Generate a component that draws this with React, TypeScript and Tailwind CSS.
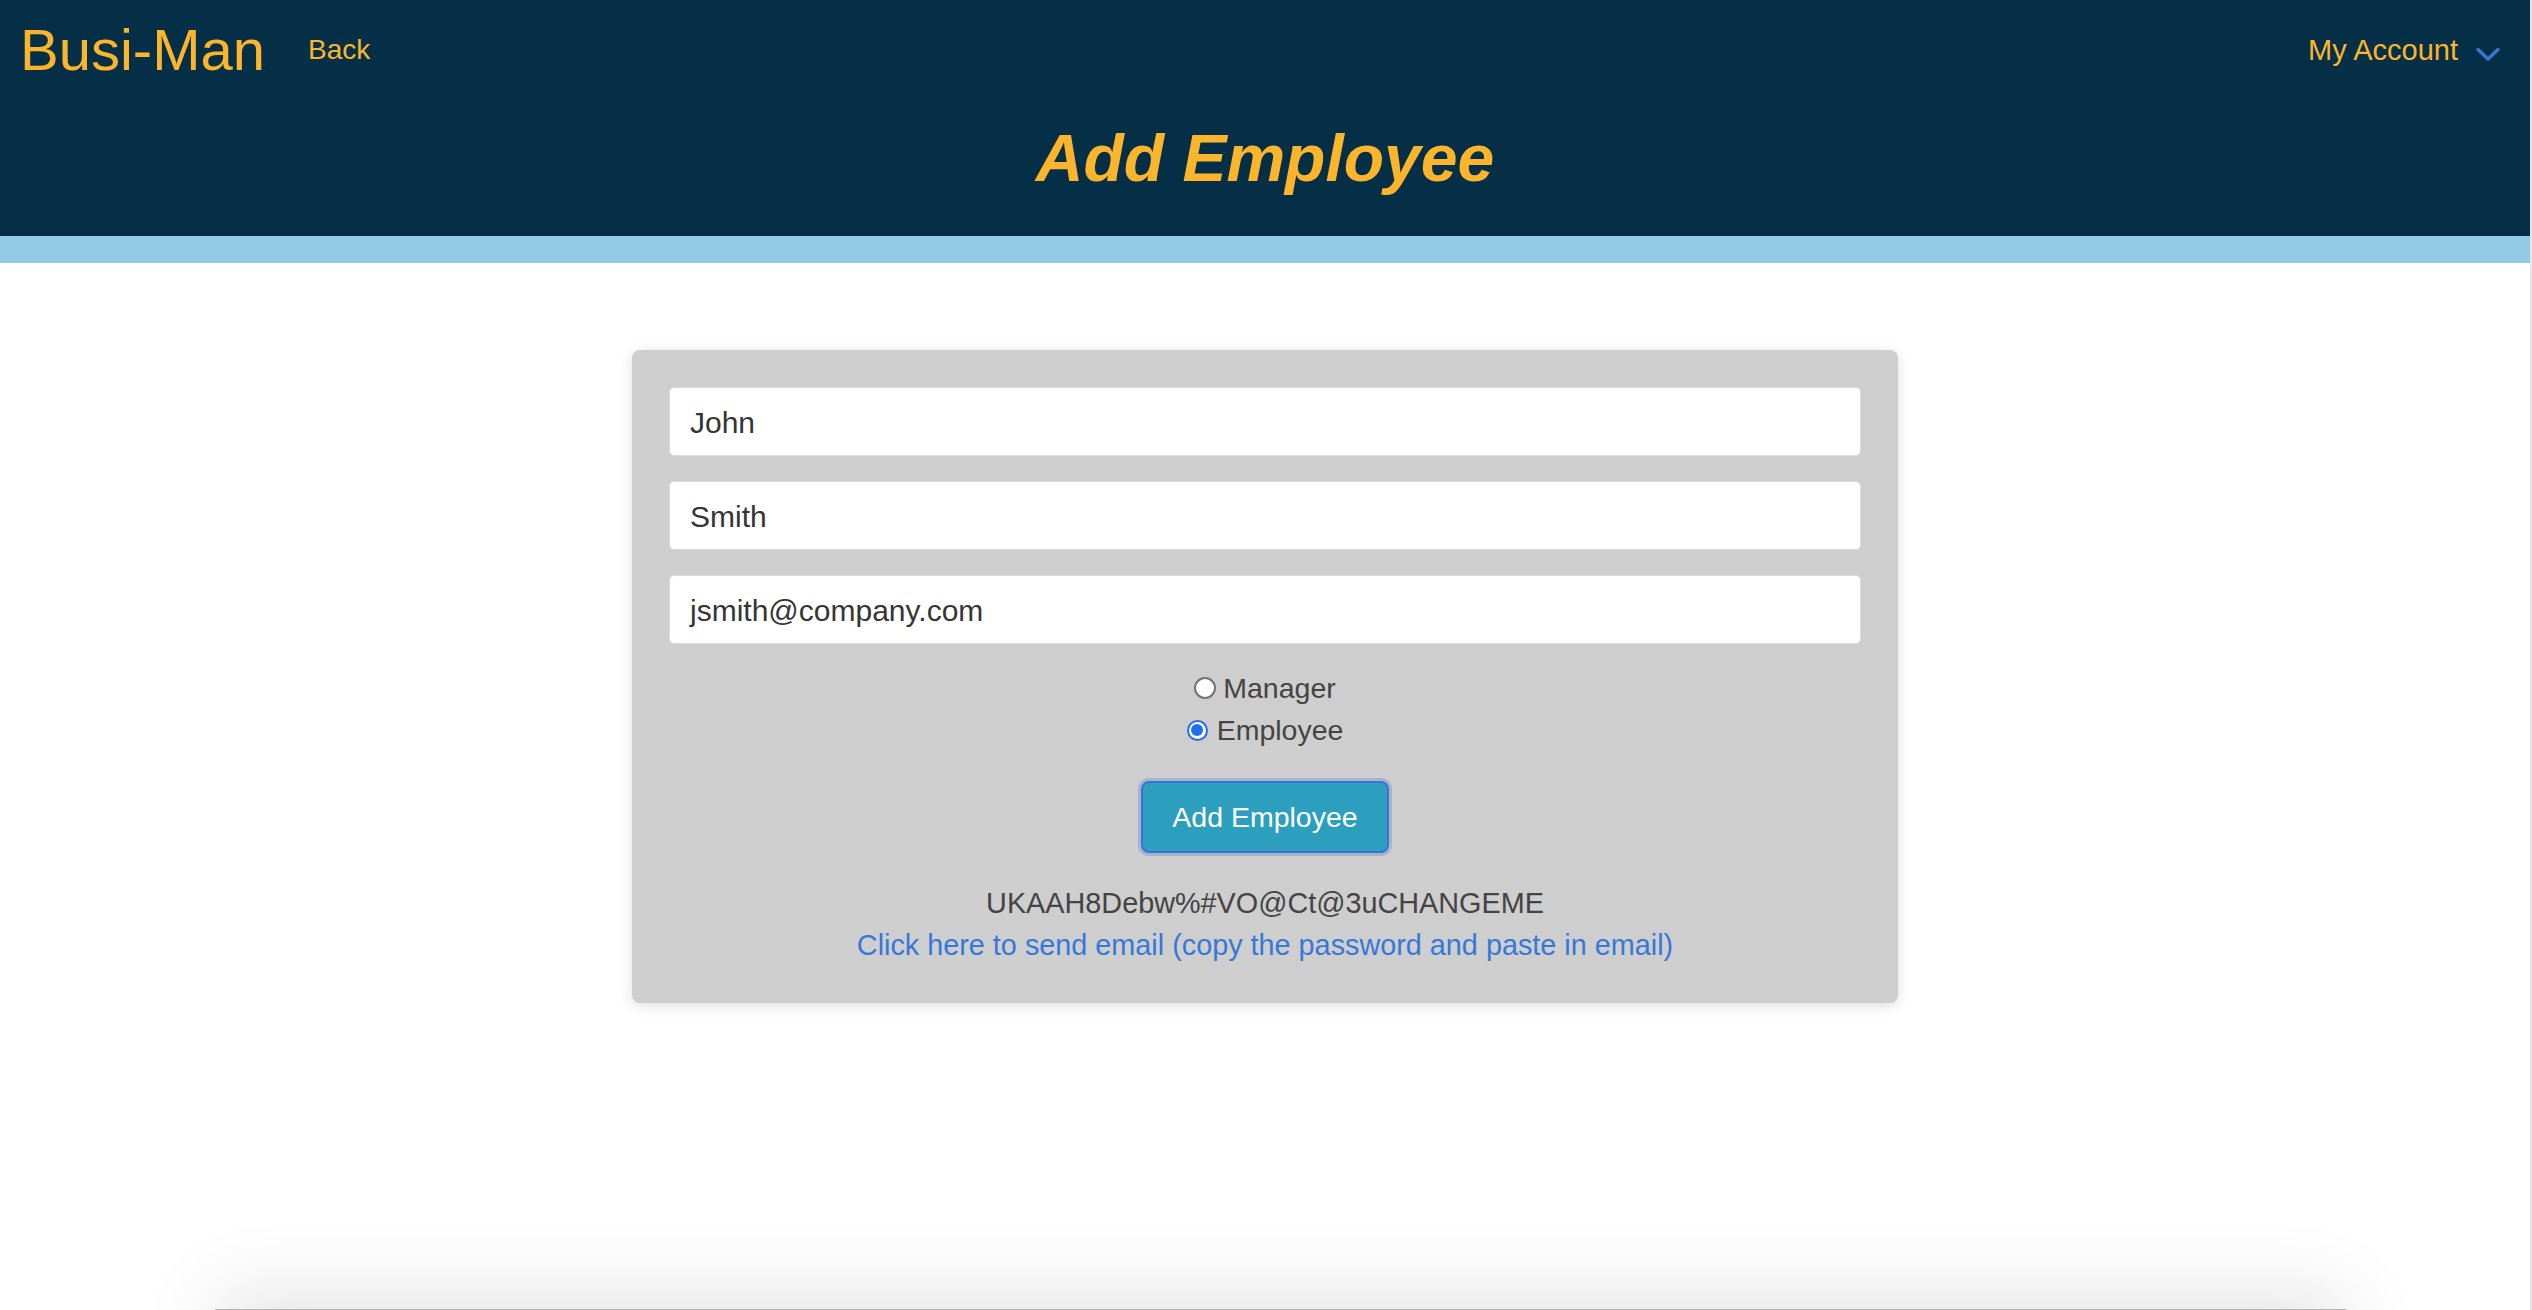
import React from "react";

const font = { fontFamily: '"Liberation Sans", Arial, Helvetica, sans-serif' };

function Radio({ checked }: { checked: boolean }) {
  return checked ? (
    <span className="flex h-[21px] w-[21px] items-center justify-center rounded-full bg-[#1f6ff0]">
      <span className="flex h-[17px] w-[17px] items-center justify-center rounded-full bg-white">
        <span className="h-[12px] w-[12px] rounded-full bg-[#1f6ff0]" />
      </span>
    </span>
  ) : (
    <span className="h-[22px] w-[22px] rounded-full border-[2px] border-[#737373] bg-white" />
  );
}

export default function App() {
  return (
    <div className="flex h-[1310px] w-full overflow-hidden bg-white" style={font}>
      <div className="flex min-w-0 flex-1 flex-col">
        <header className="h-[236px] shrink-0 bg-[#042f46]">
          <div className="flex items-start justify-between">
            <div className="flex items-start">
              <a className="ml-[20px] mt-[21px] text-[58px] leading-none text-[#fbb52c]">Busi-Man</a>
              <a className="ml-[43px] mt-[36px] text-[28px] leading-none text-[#fbb52c]">Back</a>
            </div>
            <div className="mr-[30px] mt-[36px] flex items-start">
              <span className="text-[29px] leading-none text-[#fbb52c]">My Account</span>
              <svg className="ml-[18px] mt-[11px]" width="24" height="15" viewBox="0 0 24 15" fill="none">
                <path d="M2 2.5 L12 12 L22 2.5" stroke="#3a78d6" strokeWidth="3.2" strokeLinecap="round" strokeLinejoin="round" />
              </svg>
            </div>
          </div>
          <h1 className="mt-[46px] text-center text-[66px] font-bold italic leading-none text-[#fbb52c]">Add Employee</h1>
        </header>
        <div className="h-[27px] shrink-0 bg-[#93cbe5]" />
        <main className="flex flex-col items-center">
          <div className="mt-[87px] flex w-[1266px] flex-col rounded-[8px] bg-[#cecece] px-[37px] pb-[37px] pt-[37px] shadow-[0_3px_14px_rgba(0,0,0,0.13)]">
            <div className="flex flex-col gap-[25px]">
              {["John", "Smith", "jsmith@company.com"].map((v) => (
                <div
                  key={v}
                  className="flex h-[69px] items-center rounded-[5px] border border-[#dcdcdc] bg-white pl-[20px] pt-[2px] text-[30px] text-[#353535]"
                >
                  {v}
                </div>
              ))}
            </div>
            <div className="mt-[23px] flex flex-col items-center text-[28.5px] leading-[42px] text-[#444444]">
              <label className="flex items-center gap-[7px]">
                <Radio checked={false} />
                <span>Manager</span>
              </label>
              <label className="flex items-center gap-[9px]">
                <Radio checked={true} />
                <span>Employee</span>
              </label>
            </div>
            <div className="mt-[30px] flex justify-center">
              <button className="flex h-[72px] w-[248px] items-center justify-center rounded-[8px] border-2 border-[#3a72d8] bg-[#2b9fbd] text-[28.5px] text-white shadow-[0_0_0_3px_rgba(120,145,200,0.45)]">
                Add Employee
              </button>
            </div>
            <div className="mt-[29px] text-center text-[28.8px] leading-[42px] text-[#444444]">
              UKAAH8Debw%#VO@Ct@3uCHANGEME
            </div>
            <a className="text-center text-[28.8px] leading-[42px] text-[#3678d8]">
              Click here to send email (copy the password and paste in email)
            </a>
          </div>
          <div className="ml-[30px] mt-[306px] h-[120px] w-[2131px] shrink-0 border-t-2 border-[#b4b4b4] bg-[#d0d0d0] shadow-[0_-16px_80px_rgba(0,0,0,0.11)]" />
        </main>
      </div>
      <div className="w-[2px] shrink-0 bg-[#e6e6e6]" />
    </div>
  );
}
